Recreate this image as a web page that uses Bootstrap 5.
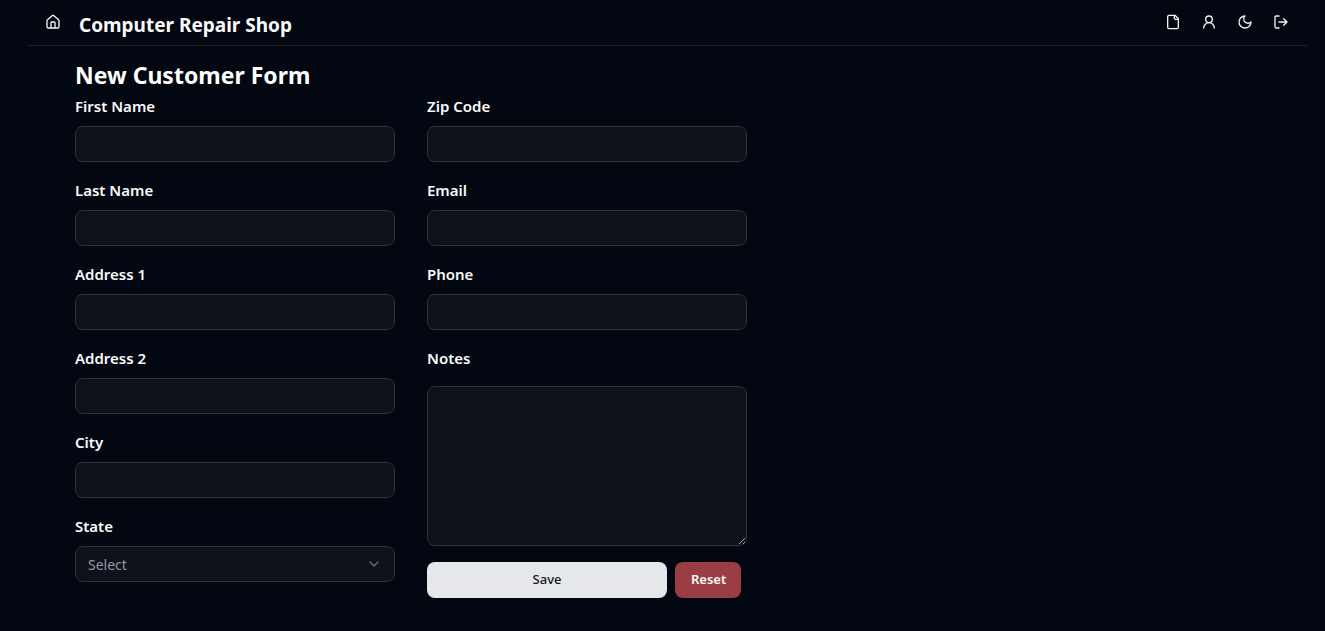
<!DOCTYPE html>
<html lang="en" data-bs-theme="dark">
<head>
<meta charset="utf-8">
<meta name="viewport" content="width=device-width, initial-scale=1">
<title>Computer Repair Shop</title>
<link href="https://cdn.jsdelivr.net/npm/bootstrap@5.3.0/dist/css/bootstrap.min.css" rel="stylesheet">
<style>
  body { background: #020711; color: #fafafa; font-family: "Segoe UI", "Noto Sans", sans-serif; font-size: 14px; line-height: 20px; }
  .page { max-width: 1325px; padding: 0 18px 0 27px; }
  .topbar { height: 46px; padding: 4px 8px; border-bottom: 1px solid #1c2029; }
  .icon-btn { width: 36px; height: 36px; display: flex; align-items: center; justify-content: center; color: #f3f4f6; border-radius: 8px; }
  .icon-btn:hover { background: #1f2937; }
  .icon-btn svg { width: 16px; height: 16px; fill: none; stroke: currentColor; stroke-width: 2; stroke-linecap: round; stroke-linejoin: round; }
  .brand { font-size: 19px; font-weight: 700; line-height: 28px; padding-top: 7px; }
  .form-area { padding: 14px 48px 32px; }
  .form-title { font-size: 23px; font-weight: 700; line-height: 30px; margin: 0 0 4px; }
  .customer-form { gap: 0 32px; }
  .form-col { width: 320px; gap: 16px; }
  .form-col .form-label { display: block; font-size: 15px; font-weight: 600; line-height: 24px; margin-bottom: 8px; }
  .form-col .notes-label { margin-bottom: 16px; }
  .form-col .form-control, .form-col .form-select { height: 36px; padding: 4px 12px; font-size: 14px; background-color: #0e121b; border: 1px solid #2f333c; border-radius: 8px; }
  .form-col .form-select { color: #949aa5; background-position: right 12px center; background-size: 16px;
    background-image: url("data:image/svg+xml,%3csvg xmlns='http://www.w3.org/2000/svg' viewBox='0 0 24 24' fill='none' stroke='%23686d77' stroke-width='2' stroke-linecap='round' stroke-linejoin='round'%3e%3cpath d='m6 9 6 6 6-6'/%3e%3c/svg%3e"); }
  .form-col textarea.form-control { height: 160px; display: block; }
  .form-col .btn { height: 36px; padding: 0 16px; border: 0; border-radius: 8px; font-size: 13px; font-weight: 600; }
  .form-col .btn-save { width: 75%; background: #e5e7eb; color: #111827; font-weight: 500; }
  .btn-reset { width: 66px; background: #9b3e44; color: #fafafa; }
  .form-col .btn-save:hover { background: #d1d5db; color: #111827; }
  .btn-reset:hover { background: #7f1d1d; color: #fafafa; }
</style>
</head>
<body>
<div class="page mx-auto">
  <header class="topbar d-flex justify-content-between">
    <div class="d-flex gap-2">
      <a class="icon-btn" href="#" aria-label="Home"><svg viewBox="0 0 24 24"><path d="M15 21v-8a1 1 0 0 0-1-1h-4a1 1 0 0 0-1 1v8"/><path d="M3 10a2 2 0 0 1 .709-1.528l7-6a2 2 0 0 1 2.582 0l7 6A2 2 0 0 1 21 10v9a2 2 0 0 1-2 2H5a2 2 0 0 1-2-2z"/></svg></a>
      <a class="brand text-reset text-decoration-none" href="#">Computer Repair Shop</a>
    </div>
    <nav class="d-flex" aria-label="Main">
      <a class="icon-btn" href="#" aria-label="Tickets"><svg viewBox="0 0 24 24"><path d="M15 2H6a2 2 0 0 0-2 2v16a2 2 0 0 0 2 2h12a2 2 0 0 0 2-2V7z"/><path d="M14 2v4a2 2 0 0 0 2 2h4"/></svg></a>
      <a class="icon-btn" href="#" aria-label="Customers"><svg viewBox="0 0 24 24"><circle cx="12" cy="8" r="5"/><path d="M20 21a8 8 0 0 0-16 0"/></svg></a>
      <button class="icon-btn border-0 bg-transparent p-0" type="button" aria-label="Toggle theme"><svg viewBox="0 0 24 24"><path d="M12 3a6 6 0 0 0 9 9 9 9 0 1 1-9-9z"/></svg></button>
      <a class="icon-btn" href="#" aria-label="Log out"><svg viewBox="0 0 24 24"><path d="M9 21H5a2 2 0 0 1-2-2V5a2 2 0 0 1 2-2h4M16 17l5-5-5-5M21 12H9"/></svg></a>
    </nav>
  </header>
  <main class="form-area">
    <h1 class="form-title">New Customer Form</h1>
    <form class="customer-form d-flex flex-wrap">
      <div class="form-col d-flex flex-column">
        <div><label class="form-label" for="first">First Name</label><input class="form-control" id="first" type="text"></div>
        <div><label class="form-label" for="last">Last Name</label><input class="form-control" id="last" type="text"></div>
        <div><label class="form-label" for="address1">Address 1</label><input class="form-control" id="address1" type="text"></div>
        <div><label class="form-label" for="address2">Address 2</label><input class="form-control" id="address2" type="text"></div>
        <div><label class="form-label" for="city">City</label><input class="form-control" id="city" type="text"></div>
        <div><label class="form-label" for="state">State</label><select class="form-select" id="state"><option>Select</option></select></div>
      </div>
      <div class="form-col d-flex flex-column">
        <div><label class="form-label" for="zip">Zip Code</label><input class="form-control" id="zip" type="text"></div>
        <div><label class="form-label" for="email">Email</label><input class="form-control" id="email" type="email"></div>
        <div><label class="form-label" for="phone">Phone</label><input class="form-control" id="phone" type="tel"></div>
        <div><label class="form-label notes-label" for="notes">Notes</label><textarea class="form-control" id="notes"></textarea></div>
        <div class="d-flex gap-2"><button class="btn btn-save" type="submit">Save</button><button class="btn btn-reset" type="reset">Reset</button></div>
      </div>
    </form>
  </main>
</div>
<script src="https://cdn.jsdelivr.net/npm/bootstrap@5.3.0/dist/js/bootstrap.bundle.min.js"></script>
</body>
</html>
